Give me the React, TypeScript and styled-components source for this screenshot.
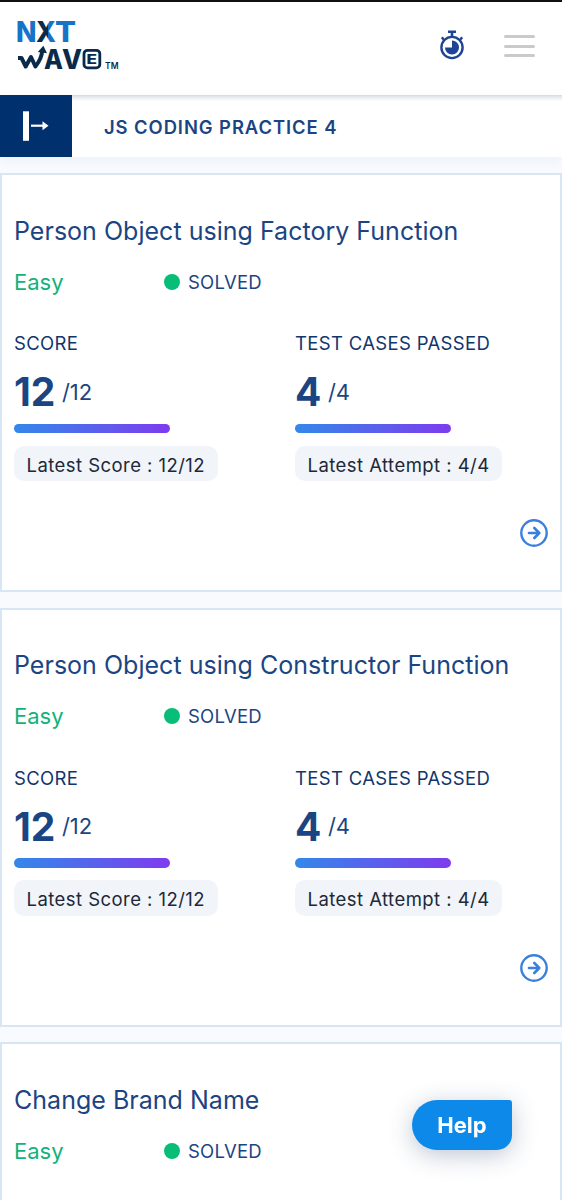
import React from "react";
import styled, { createGlobalStyle } from "styled-components";

const GlobalStyle = createGlobalStyle`
  * { box-sizing: border-box; }
  html, body { margin: 0; height: 1200px; overflow: hidden; }
  body { background: #f8fafe; font-family: Inter, sans-serif; color: #1b4582; }
`;

const Page = styled.div`
  width: 562px;
  height: 1200px;
  overflow: hidden;
  display: flex;
  flex-direction: column;
  background: #f8fafe;
`;

const Header = styled.header`
  flex: none;
  height: 96px;
  display: flex;
  align-items: center;
  justify-content: space-between;
  padding: 0 27px 7px 14px;
  background: #fff;
  border-top: 2px solid #111;
  border-bottom: 1px solid #dde0e5;
`;

const Actions = styled.div`
  display: flex;
  align-items: center;
  gap: 38px;
`;

const MenuButton = styled.button`
  display: flex;
  flex-direction: column;
  gap: 6.5px;
  width: 31px;
  padding: 0;
  border: 0;
  background: none;
  margin-top: 2px;
`;

const MenuLine = styled.span`
  height: 3px;
  border-radius: 2px;
  background: #cacaca;
`;

const TitleBar = styled.div`
  flex: none;
  height: 61px;
  display: flex;
  background: linear-gradient(#dfe2e8, #fff 5px);
  box-shadow: 0 3px 12px rgba(70, 100, 180, 0.07);
`;

const BackButton = styled.button`
  width: 72px;
  border: 0;
  padding: 0;
  margin-top: -1px;
  background: #00306e;
  svg { display: block; }
`;

const BarTitle = styled.h1`
  margin: 0 0 0 32px;
  font-size: 18.4px;
  line-height: 62px;
  font-weight: 620;
  letter-spacing: 0.94px;
  white-space: nowrap;
`;

const CardList = styled.main`
  display: flex;
  flex-direction: column;
  gap: 15.5px;
  padding-top: 16px;
`;

const Card = styled.article`
  flex: none;
  height: 419.2px;
  display: flex;
  flex-direction: column;
  padding: 39.5px 12px 0;
  background: #fff;
  border: 2px solid #d8e6f4;
`;

const CardTitle = styled.h2`
  margin: 0;
  font-size: 25px;
  line-height: 32px;
  font-weight: 430;
  letter-spacing: 0.02px;
  white-space: nowrap;
`;

const StatusRow = styled.div`
  display: flex;
  align-items: center;
  height: 32px;
  margin-top: 19.2px;
`;

const Difficulty = styled.span`
  width: 150px;
  font-size: 22px;
  font-weight: 430;
  color: #12b279;
`;

const Status = styled.span`
  display: flex;
  align-items: center;
  gap: 8px;
  font-size: 18.5px;
  font-weight: 430;
  letter-spacing: 0.23px;
`;

const Dot = styled.span`
  width: 16px;
  height: 16px;
  border-radius: 50%;
  background: #07bd77;
`;

const Stats = styled.div`
  display: grid;
  grid-template-columns: 281px 1fr;
  margin-top: 33.5px;
`;

const Stat = styled.section`
  display: flex;
  flex-direction: column;
  align-items: flex-start;
`;

const StatLabel = styled.div`
  font-size: 18.5px;
  line-height: 24px;
  font-weight: 440;
  letter-spacing: 0.33px;
  white-space: nowrap;
  color: #12366b;
`;

const StatValue = styled.div`
  display: flex;
  align-items: center;
  gap: 7px;
  height: 40px;
  margin-top: 16.5px;
`;

const Earned = styled.strong`
  font-size: 39px;
  font-weight: 700;
`;

const Total = styled.span`
  font-size: 22px;
  font-weight: 380;
  margin-left: -0.5px;
`;

const Progress = styled.div`
  width: 156px;
  height: 9.5px;
  margin-top: 12px;
  border-radius: 5px;
  background: linear-gradient(90deg, #3388ea, #7e3bee);
`;

const Latest = styled.div`
  height: 35.5px;
  margin-top: 12.4px;
  padding: 0 12.5px;
  border-radius: 10px;
  background: #f1f4f9;
  color: #202838;
  font-size: 18.5px;
  font-weight: 440;
  line-height: 39px;
  letter-spacing: 0.45px;
  white-space: nowrap;
`;

const OpenButton = styled.button`
  align-self: flex-end;
  width: 28px;
  height: 28px;
  margin-top: 37.8px;
  padding: 0;
  border: 0;
  background: none;
  svg { display: block; }
`;

const HelpButton = styled.button`
  position: fixed;
  left: 412px;
  top: 1100px;
  width: 100px;
  height: 50px;
  padding: 0;
  border: 0;
  border-radius: 25px 3px 15px 25px;
  background: #0d89e9;
  color: #fff;
  font: 700 22px/50px Inter, sans-serif;
  box-shadow: 0 5px 24px rgba(40, 65, 110, 0.3);
`;

const Logo = () => (
  <svg width="108" height="58" viewBox="14 16 108 58" role="img" aria-label="NXT Wave">
    <defs>
      <linearGradient id="xShade">
        <stop offset="0.6" stopColor="#0a2a4a" />
        <stop offset="0.6" stopColor="#1673c8" />
      </linearGradient>
    </defs>
    <g fontFamily="Inter, sans-serif" fontWeight="800" fontSize="28" fill="#1673c8">
      <text x="16" y="41.5" textLength="20.5" lengthAdjust="spacingAndGlyphs">N</text>
      <text x="36" y="41.5" textLength="20" lengthAdjust="spacingAndGlyphs" fill="url(#xShade)">X</text>
      <text x="55" y="41.5" textLength="21" lengthAdjust="spacingAndGlyphs">T</text>
    </g>
    <path d="M18 58h3.5l4.2 8.5 5.3-9.5 4.4 9.5c4-5 6.5-10 6.8-16" fill="none" stroke="#0a2a4a" strokeWidth="4" strokeLinejoin="round" />
    <path d="M37.8 52l5.6-6.3 3.6 7.6z" fill="#0a2a4a" />
    <g fontFamily="Inter, sans-serif" fontWeight="800" fontSize="26.5" fill="#0a2a4a">
      <text x="44" y="69" textLength="19" lengthAdjust="spacingAndGlyphs">A</text>
      <text x="62" y="69" textLength="20" lengthAdjust="spacingAndGlyphs">V</text>
    </g>
    <rect x="84" y="50.3" width="15.8" height="17.6" rx="3.5" fill="none" stroke="#0a2a4a" strokeWidth="2.8" />
    <text x="86.6" y="63.9" fontFamily="Inter, sans-serif" fontWeight="800" fontSize="13" fill="#0a2a4a" textLength="10.5" lengthAdjust="spacingAndGlyphs">E</text>
    <text x="105" y="69" fontFamily="Inter, sans-serif" fontWeight="600" fontSize="8.5" fill="#0a2a4a" textLength="13.5" lengthAdjust="spacingAndGlyphs">TM</text>
  </svg>
);

const Stopwatch = () => (
  <svg width="28" height="32" viewBox="438 29 28 32" fill="none" stroke="#1f4494">
    <circle cx="452" cy="47.5" r="10.6" strokeWidth="2.4" />
    <path d="M448 31.8h8M452 31.5v5" strokeWidth="2.6" />
    <path d="M441.8 37.3l2.6 3.2M462.2 37.3l-2.6 3.2" strokeWidth="2.4" />
    <path d="M452 47.5v-7a7 7 0 1 1-7 7z" fill="#1f4494" stroke="none" />
  </svg>
);

const BackIcon = () => (
  <svg width="72" height="62" viewBox="0 95 72 62">
    <path d="M23 111.3h6v29.5h-6z" fill="#fff" />
    <path d="M31 125.7h13" stroke="#fff" strokeWidth="2.2" />
    <path d="M42.5 121.2l6 4.5-6 4.5z" fill="#fff" />
  </svg>
);

const OpenIcon = () => (
  <svg width="28" height="28" viewBox="0 0 28 28" fill="none" stroke="#3a80dc" strokeLinecap="round" strokeLinejoin="round">
    <circle cx="14" cy="14" r="12.7" strokeWidth="2.4" />
    <path d="M9 14h10M14.3 9l5 5-5 5" strokeWidth="2.6" />
  </svg>
);

type StatProps = { label: string; earned: number; total: number; latest: string };

const StatBlock = ({ label, earned, total, latest }: StatProps) => (
  <Stat>
    <StatLabel>{label}</StatLabel>
    <StatValue>
      <Earned>{earned}</Earned>
      <Total>/{total}</Total>
    </StatValue>
    <Progress />
    <Latest>{`${latest} : ${earned}/${total}`}</Latest>
  </Stat>
);

const problems = [
  "Person Object using Factory Function",
  "Person Object using Constructor Function",
  "Change Brand Name",
];

export default function App() {
  return (
    <Page>
      <GlobalStyle />
      <Header>
        <Logo />
        <Actions>
          <Stopwatch />
          <MenuButton aria-label="Menu">
            <MenuLine />
            <MenuLine />
            <MenuLine />
          </MenuButton>
        </Actions>
      </Header>
      <TitleBar>
        <BackButton aria-label="Open panel">
          <BackIcon />
        </BackButton>
        <BarTitle>JS CODING PRACTICE 4</BarTitle>
      </TitleBar>
      <CardList>
        {problems.map((title) => (
          <Card key={title}>
            <CardTitle>{title}</CardTitle>
            <StatusRow>
              <Difficulty>Easy</Difficulty>
              <Status>
                <Dot />
                SOLVED
              </Status>
            </StatusRow>
            <Stats>
              <StatBlock label="SCORE" earned={12} total={12} latest="Latest Score" />
              <StatBlock label="TEST CASES PASSED" earned={4} total={4} latest="Latest Attempt" />
            </Stats>
            <OpenButton aria-label="Open problem">
              <OpenIcon />
            </OpenButton>
          </Card>
        ))}
      </CardList>
      <HelpButton>Help</HelpButton>
    </Page>
  );
}
